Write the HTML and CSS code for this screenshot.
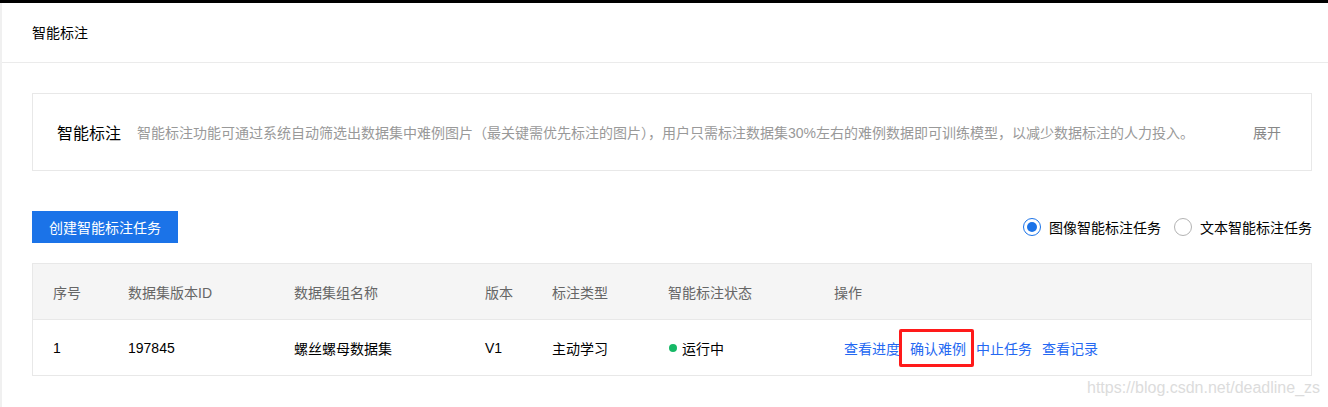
FILE: index.html
```html
<!DOCTYPE html>
<html lang="zh-CN">
<head>
<meta charset="utf-8">
<title>智能标注</title>
<link rel="stylesheet" href="styles.css">
</head>
<body>
<div class="topbar"></div>
<div class="layout">
  <div class="sidebar-edge"></div>
  <div class="page">
    <div class="page-header">智能标注</div>
    <div class="content">
      <div class="intro">
        <span class="intro-title">智能标注</span>
        <span class="intro-desc">智能标注功能可通过系统自动筛选出数据集中难例图片（最关键需优先标注的图片），用户只需标注数据集30%左右的难例数据即可训练模型，以减少数据标注的人力投入。</span>
        <span class="intro-toggle">展开</span>
      </div>
      <div class="toolbar">
        <button class="btn-primary">创建智能标注任务</button>
        <div class="radio-group">
          <label class="radio checked"><span class="radio-dot"></span>图像智能标注任务</label>
          <label class="radio"><span class="radio-dot"></span>文本智能标注任务</label>
        </div>
      </div>
      <div class="table">
        <div class="tr th">
          <div class="c c1">序号</div>
          <div class="c c2">数据集版本ID</div>
          <div class="c c3">数据集组名称</div>
          <div class="c c4">版本</div>
          <div class="c c5">标注类型</div>
          <div class="c c6">智能标注状态</div>
          <div class="c c7">操作</div>
        </div>
        <div class="tr td">
          <div class="c c1">1</div>
          <div class="c c2">197845</div>
          <div class="c c3">螺丝螺母数据集</div>
          <div class="c c4">V1</div>
          <div class="c c5">主动学习</div>
          <div class="c c6"><span class="status-dot"></span>运行中</div>
          <div class="c c7 ops">
            <a class="link">查看进度</a>
            <a class="link marked">确认难例</a>
            <a class="link">中止任务</a>
            <a class="link">查看记录</a>
          </div>
        </div>
      </div>
    </div>
  </div>
</div>
<div class="watermark">https://blog.csdn.net/deadline_zs</div>
</body>
</html>
```

FILE: styles.css
```css
* { box-sizing: border-box; }
html, body {
  margin: 0;
  padding: 0;
  background: #fff;
  font-family: "Liberation Sans", "Noto Sans CJK SC", sans-serif;
  font-size: 14px;
  color: #333;
}
.topbar {
  height: 3px;
  background: #000;
}
.layout {
  display: flex;
  height: 404px;
}
.sidebar-edge {
  width: 2px;
  background: #f0f0f0;
  flex: none;
}
.page {
  flex: 1;
  min-width: 0;
}
.page-header {
  height: 60px;
  border-bottom: 1px solid #ebebeb;
  padding-left: 30px;
  display: flex;
  align-items: center;
  color: #000;
  font-size: 14px;
  padding-bottom: 1px;
}
.content {
  padding: 30px 16px 0 30px;
}
.intro {
  height: 78px;
  border: 1px solid #e8e8e8;
  display: flex;
  align-items: center;
  padding: 0 30px 0 24px;
}
.intro-title {
  font-size: 16px;
  color: #000;
  margin-right: 16px;
  flex: none;
}
.intro-desc {
  color: #999;
  font-size: 14px;
  flex: 1;
  white-space: nowrap;
}
.intro-toggle {
  color: #888;
  flex: none;
}
.toolbar {
  margin-top: 40px;
  display: flex;
  align-items: center;
  justify-content: space-between;
}
.btn-primary {
  height: 32px;
  width: 146px;
  border: none;
  background: #1b73e8;
  color: #fff;
  font-family: inherit;
  font-size: 14px;
  padding: 0;
}
.radio-group {
  display: flex;
  gap: 13px;
  align-items: center;
}
.radio {
  display: flex;
  align-items: center;
  color: #000;
}
.radio-dot {
  width: 18px;
  height: 18px;
  border: 1px solid #b3b3b3;
  border-radius: 50%;
  margin-right: 8px;
  position: relative;
}
.radio.checked .radio-dot {
  border-color: #1b73e8;
}
.radio.checked .radio-dot::after {
  content: "";
  position: absolute;
  left: 3px;
  top: 3px;
  width: 10px;
  height: 10px;
  border-radius: 50%;
  background: #1b73e8;
}
.table {
  margin-top: 20px;
  border: 1px solid #e8e8e8;
}
.tr {
  display: flex;
  height: 56px;
  align-items: center;
}
.th {
  background: #f5f5f5;
  color: #666;
  border-bottom: 1px solid #e8e8e8;
}
.td {
  color: #000;
  height: 55px;
}
.c { flex: none; padding-left: 20px; }
.c1 { width: 95px; }
.c2 { width: 166px; padding-left: 0; }
.c3 { width: 191px; padding-left: 0; }
.c4 { width: 67px; padding-left: 0; }
.c5 { width: 116px; padding-left: 0; }
.c6 { width: 166px; padding-left: 0; display: flex; align-items: center; }
.c7 { flex: 1; padding-left: 0; }
.status-dot {
  width: 8px;
  height: 8px;
  border-radius: 50%;
  background: #16b866;
  margin-left: 1px;
  margin-right: 5px;
}
.ops {
  display: flex;
  align-items: center;
  padding-left: 10px;
}
.link {
  color: #2468f2;
  margin-right: 10px;
  position: relative;
}
.marked::after {
  content: "";
  position: absolute;
  left: -11px;
  right: -8px;
  top: -9px;
  bottom: -9px;
  border: 3px solid #ff1a1a;
  border-radius: 2px;
}
.watermark {
  position: absolute;
  left: 1087px;
  top: 379px;
  color: #dcdcdc;
  font-size: 16px;
  font-family: "Liberation Sans", sans-serif;
}
```
